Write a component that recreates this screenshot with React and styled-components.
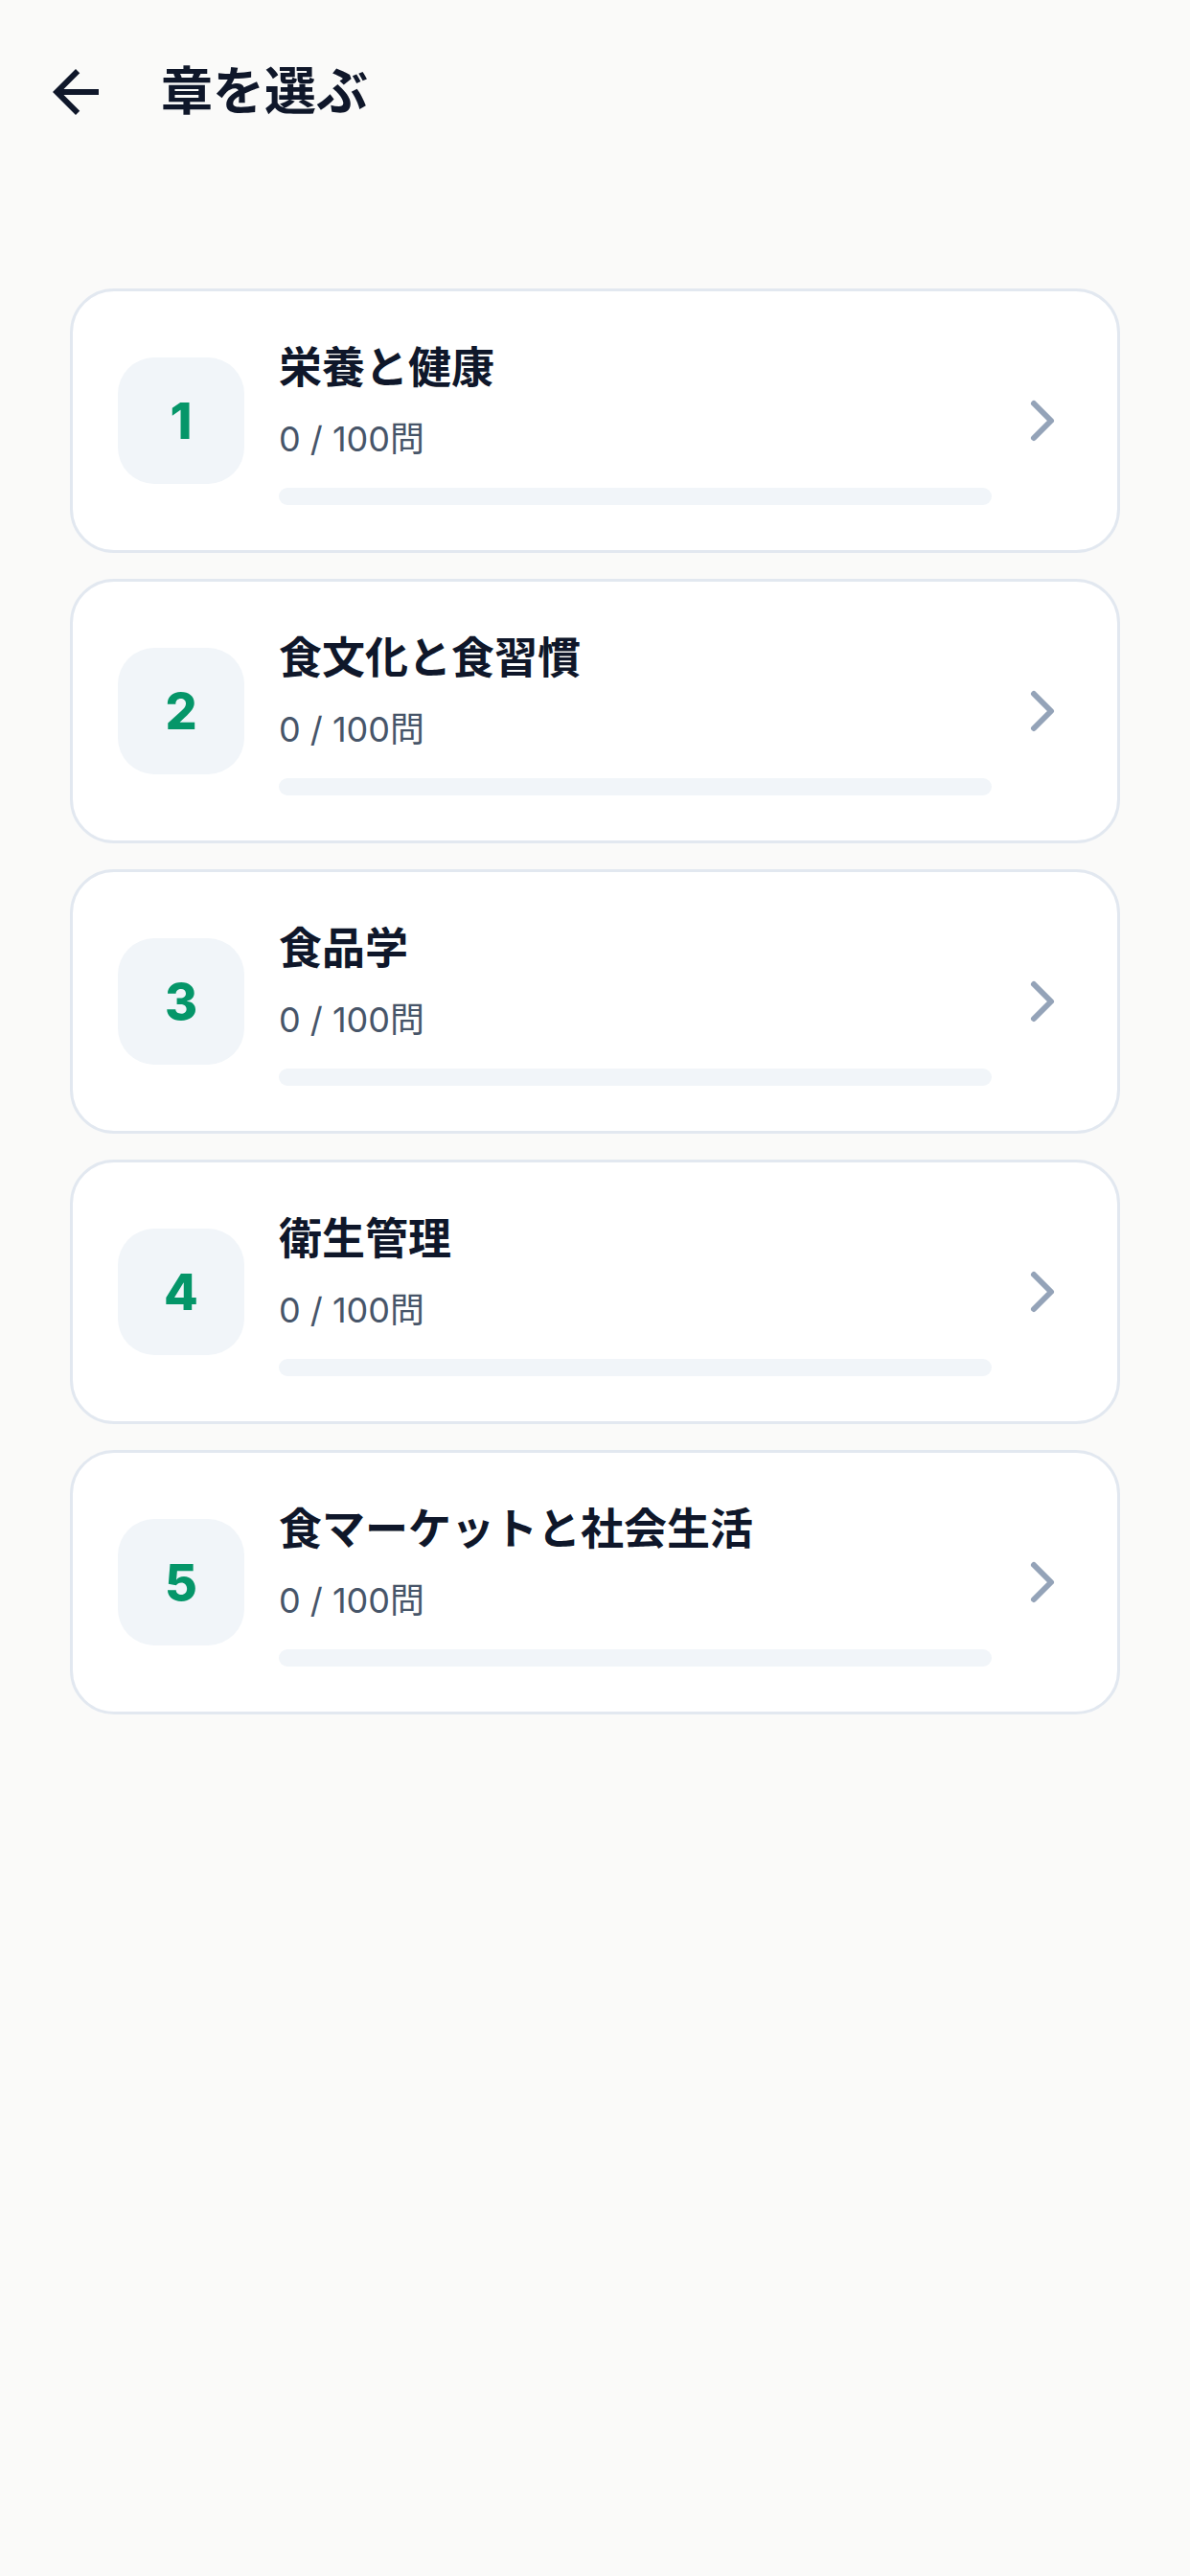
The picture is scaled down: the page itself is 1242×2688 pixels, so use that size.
import React from 'react'
import styled, {createGlobalStyle} from "styled-components";
import {MdArrowBack} from "react-icons/md";
import {ChevronRight} from "lucide-react";

const GlobalStyle = createGlobalStyle`
    html, body {
        margin: 0;
        padding: 0;
        background: #fafaf9;
    }
    body {
        font-family: Inter, "Noto Sans CJK JP", sans-serif;
        color: #0f172a;
    }
`;

const Page = styled.div`
    min-height: 2688px;
    background: #fafaf9;
`;

const Header = styled.header`
    display: flex;
    align-items: center;
    gap: 53px;
    height: 72px;
    padding: 60px 0 0 43px;
`;

const BackButton = styled.button`
    display: flex;
    align-items: center;
    justify-content: center;
    width: 72px;
    height: 72px;
    padding: 0;
    border: none;
    background: none;
    color: #0f172a;
`;

const Title = styled.h1`
    margin: 0;
    font-size: 54px;
    line-height: 72px;
    font-weight: 700;
    color: #0f172a;
`;

const List = styled.div`
    display: flex;
    flex-direction: column;
    gap: 27px;
    padding: 169px 73px 0;
`;

const Card = styled.div`
    display: flex;
    align-items: center;
    height: 270px;
    box-sizing: content-box;
    padding: 0 42px 0 47px;
    background: #ffffff;
    border: 3px solid #e2e8f0;
    border-radius: 46px;
`;

const NumberBox = styled.div`
    flex: none;
    display: flex;
    align-items: center;
    justify-content: center;
    width: 132px;
    height: 132px;
    border-radius: 38px;
    background: #f1f5f9;
    color: #059669;
    font-size: 52px;
    font-weight: 800;
`;

const Body = styled.div`
    flex: 1;
    display: flex;
    flex-direction: column;
    margin: 0 17px 0 36px;
    padding-top: 3px;
`;

const ChapterName = styled.div`
    font-size: 45px;
    line-height: 60px;
    font-weight: 700;
    color: #0f172a;
`;

const Count = styled.div`
    margin-top: 19px;
    font-size: 36px;
    line-height: 50px;
    color: #475569;
`;

const Track = styled.div`
    margin-top: 26px;
    height: 18px;
    border-radius: 9px;
    background: #f1f5f9;
    overflow: hidden;
`;

const Fill = styled.div`
    height: 100%;
    background: #059669;
`;

const Arrow = styled.div`
    flex: none;
    display: flex;
    color: #94a3b8;
`;

const chapters = [
    {no: 1, name: "栄養と健康", done: 0, total: 100},
    {no: 2, name: "食文化と食習慣", done: 0, total: 100},
    {no: 3, name: "食品学", done: 0, total: 100},
    {no: 4, name: "衛生管理", done: 0, total: 100},
    {no: 5, name: "食マーケットと社会生活", done: 0, total: 100},
];

export default function App() {
    return (
        <Page>
            <GlobalStyle />
            <Header>
                <BackButton type="button"><MdArrowBack size={72} /></BackButton>
                <Title>章を選ぶ</Title>
            </Header>
            <List>
                {chapters.map(c => (
                    <Card key={c.no}>
                        <NumberBox>{c.no}</NumberBox>
                        <Body>
                            <ChapterName>{c.name}</ChapterName>
                            <Count>{c.done} / {c.total}問</Count>
                            <Track>
                                <Fill style={{width: `${(c.done / c.total) * 100}%`}} />
                            </Track>
                        </Body>
                        <Arrow><ChevronRight size={72} strokeWidth={2} /></Arrow>
                    </Card>
                ))}
            </List>
        </Page>
    );
}
